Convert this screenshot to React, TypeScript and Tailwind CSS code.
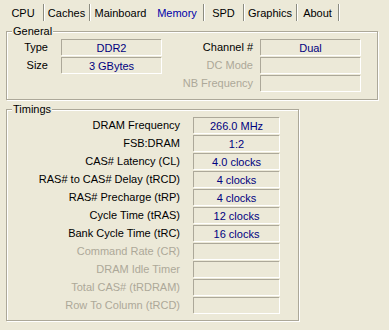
import React from 'react';

const TABS = [
  { name: 'CPU', w: 'w-[41px]', sep: true },
  { name: 'Caches', w: 'w-[46px]', sep: true },
  { name: 'Mainboard', w: 'w-[61px]', sep: false },
  { name: 'Memory', w: 'w-[53px]', sep: true, active: true },
  { name: 'SPD', w: 'w-[40px]', sep: true },
  { name: 'Graphics', w: 'w-[53px]', sep: true },
  { name: 'About', w: 'w-[42px]', sep: true },
];

const TIMINGS: { label: string; value?: string; disabled?: boolean }[] = [
  { label: 'DRAM Frequency', value: '266.0 MHz' },
  { label: 'FSB:DRAM', value: '1:2' },
  { label: 'CAS# Latency (CL)', value: '4.0 clocks' },
  { label: 'RAS# to CAS# Delay (tRCD)', value: '4 clocks' },
  { label: 'RAS# Precharge (tRP)', value: '4 clocks' },
  { label: 'Cycle Time (tRAS)', value: '12 clocks' },
  { label: 'Bank Cycle Time (tRC)', value: '16 clocks' },
  { label: 'Command Rate (CR)', disabled: true },
  { label: 'DRAM Idle Timer', disabled: true },
  { label: 'Total CAS# (tRDRAM)', disabled: true },
  { label: 'Row To Column (tRCD)', disabled: true },
];

function Field({ value, className = '' }: { value?: string; className?: string }) {
  return (
    <div
      className={`flex h-[16px] items-center justify-center border-t border-l border-[#aca899] shadow-[1px_1px_0_#fff] text-[#000080] ${className}`}
    >
      {value}
    </div>
  );
}

function GroupBox({ title, className, children }: { title: string; className: string; children: React.ReactNode }) {
  return (
    <div className={`relative border border-[#aca899] shadow-[1px_1px_0_#fff,inset_1px_1px_0_#fff] ${className}`}>
      <span className="absolute top-[-8px] left-[5px] bg-[#ece9d8] px-[1px] text-black">{title}</span>
      {children}
    </div>
  );
}

export default function App() {
  return (
    <div
      className="h-[330px] w-[389px] overflow-hidden bg-[#ece9d8] text-[11px] leading-[14px] text-black"
      style={{ fontFamily: '"Liberation Sans", Arial, sans-serif' }}
    >
      <div className="flex h-[24px] pl-[3px]">
        {TABS.map(tab => (
          <div
            key={tab.name}
            className={`mt-[4px] flex h-[17px] items-center justify-center ${tab.w} ${
              tab.sep ? 'border-r border-[#8c8c80] shadow-[1px_0_0_#fff]' : ''
            } ${tab.active ? 'text-[#0000a8]' : 'text-black'}`}
          >
            {tab.name}
          </div>
        ))}
      </div>

      <GroupBox title="General" className="mt-[7px] ml-[6px] h-[69px] w-[372px] pt-[7px]">
        <div className="flex flex-col gap-[2px]">
          <div className="flex h-[16px] items-center">
            <div className="w-[41px] text-right">Type</div>
            <Field value="DDR2" className="ml-[13px] w-[100px]" />
            <div className="w-[92px] text-right">Channel #</div>
            <Field value="Dual" className="ml-[7px] w-[100px]" />
          </div>
          <div className="flex h-[16px] items-center">
            <div className="w-[41px] text-right">Size</div>
            <Field value="3 GBytes" className="ml-[13px] w-[100px]" />
            <div className="w-[92px] text-right text-[#aca899]">DC Mode</div>
            <Field className="ml-[7px] w-[100px]" />
          </div>
          <div className="flex h-[16px] items-center">
            <div className="w-[154px]" />
            <div className="w-[92px] text-right text-[#aca899]">NB Frequency</div>
            <Field className="ml-[7px] w-[100px]" />
          </div>
        </div>
      </GroupBox>

      <GroupBox title="Timings" className="mt-[9px] ml-[6px] h-[212px] w-[293px] pt-[7px]">
        <div className="flex flex-col gap-[2px]">
          {TIMINGS.map(row => (
            <div key={row.label} className="flex h-[16px] items-center">
              <div className={`w-[173px] text-right ${row.disabled ? 'text-[#aca899]' : 'text-black'}`}>{row.label}</div>
              <Field value={row.value} className="ml-[13px] w-[86px]" />
            </div>
          ))}
        </div>
      </GroupBox>
    </div>
  );
}
